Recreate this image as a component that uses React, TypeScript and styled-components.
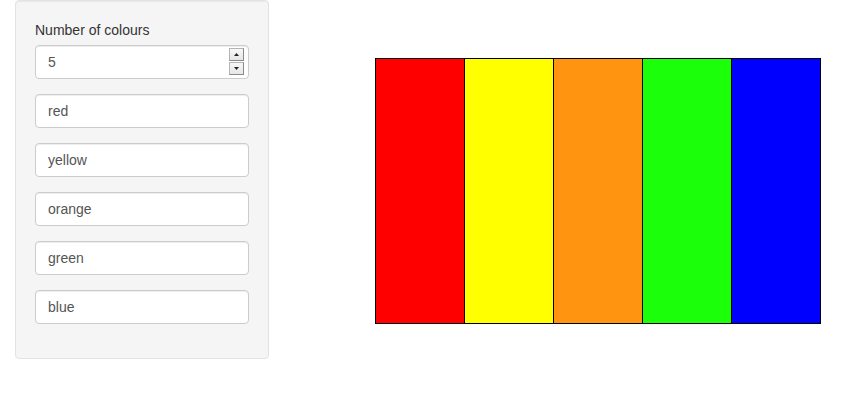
import styled, { createGlobalStyle } from 'styled-components';

const GlobalStyle = createGlobalStyle`
  body {
    margin: 0;
    background: #fff;
    font-family: "Liberation Sans", Arial, sans-serif;
    font-size: 14px;
    color: #333;
  }
`

const Page = styled.div`
  display: grid;
  grid-template-columns: 284px 1fr;
`

const SideCol = styled.div`
  padding: 0 15px;
`

const Well = styled.div`
  background: #f5f5f5;
  border: 1px solid #e3e3e3;
  border-radius: 4px;
  padding: 19px 19px 34px;
  box-shadow: inset 0 1px 1px rgba(0, 0, 0, 0.05);
  display: flex;
  flex-direction: column;
  gap: 15px;
`

const Field = styled.div`
  display: flex;
  flex-direction: column;
`

const Label = styled.label`
  line-height: 20px;
  margin-bottom: 5px;
  color: #333;
`

const InputWrap = styled.div`
  position: relative;
`

const TextInput = styled.input`
  box-sizing: border-box;
  width: 100%;
  height: 34px;
  padding: 6px 12px;
  font-family: "Liberation Sans", Arial, sans-serif;
  font-size: 14px;
  color: #555;
  background: #fff;
  border: 1px solid #ccc;
  border-radius: 4px;
  box-shadow: inset 0 1px 1px rgba(0, 0, 0, 0.075);
  outline: none;
`

const Spinner = styled.div`
  position: absolute;
  right: 5px;
  top: 3px;
  display: flex;
  flex-direction: column;
  gap: 1px;
`

const SpinButton = styled.div`
  width: 15px;
  height: 13px;
  box-sizing: border-box;
  background: linear-gradient(#f8f8f8, #e6e6e6);
  border: 1px solid #b4b4b4;
  border-right-color: #8a8a8a;
  border-bottom-color: #8a8a8a;
  display: flex;
  align-items: center;
  justify-content: center;
`

const MainCol = styled.div`
  padding: 0 15px;
`

const colours = ['red', 'yellow', 'orange', 'green', 'blue']
const fills = ['#ff0000', '#ffff00', '#ff9410', '#1cff0b', '#0000ff']

function Arrow({ up }: { up: boolean }) {
  return (
    <svg width="5" height="3" viewBox="0 0 5 3">
      <polygon points={up ? '2.5,0 5,3 0,3' : '0,0 5,0 2.5,3'} fill="#222" />
    </svg>
  )
}

function Plot() {
  return (
    <svg width="538" height="400" viewBox="0 0 538 400">
      {fills.map((f, i) => (
        <rect key={f} x={76.5 + i * 89} y={58.5} width={89} height={265} fill={f} stroke="#000" strokeWidth={1} />
      ))}
    </svg>
  )
}

export default function App() {
  return (
    <>
      <GlobalStyle />
      <Page>
        <SideCol>
          <Well>
            <Field>
              <Label>Number of colours</Label>
              <InputWrap>
                <TextInput type="text" defaultValue="5" />
                <Spinner>
                  <SpinButton><Arrow up /></SpinButton>
                  <SpinButton><Arrow up={false} /></SpinButton>
                </Spinner>
              </InputWrap>
            </Field>
            {colours.map((c) => (
              <TextInput key={c} type="text" defaultValue={c} />
            ))}
          </Well>
        </SideCol>
        <MainCol>
          <Plot />
        </MainCol>
      </Page>
    </>
  )
}
